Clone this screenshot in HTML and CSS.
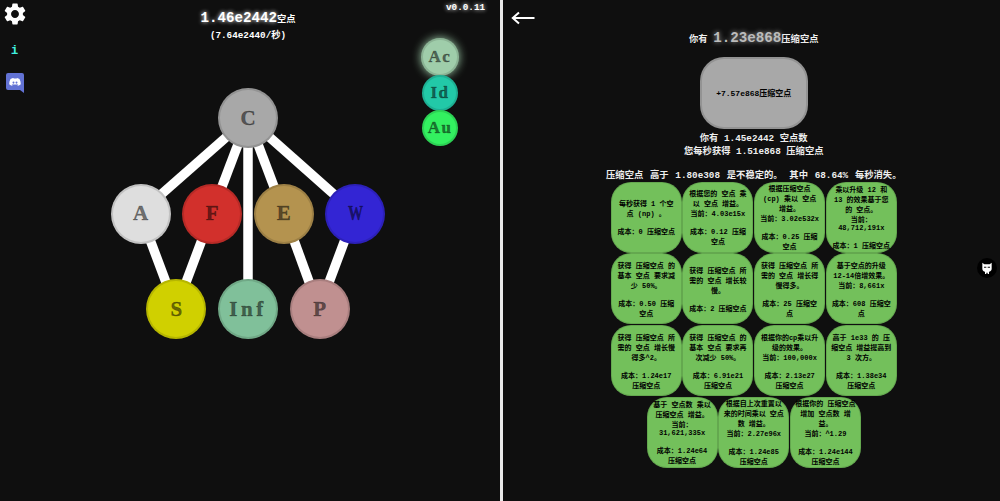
FILE: index.html
```html
<!DOCTYPE html>
<html lang="zh">
<head>
<meta charset="utf-8">
<title>Tree</title>
<link rel="stylesheet" href="styles.css">
</head>
<body>
<div class="app">
  <section class="pane-left">
    <svg class="gear" viewBox="2 2 20 20"><path fill="#fff" d="M19.14 12.94c.04-.3.06-.61.06-.94 0-.32-.02-.64-.07-.94l2.03-1.58c.18-.14.23-.41.12-.61l-1.92-3.32c-.12-.22-.37-.29-.59-.22l-2.39.96c-.5-.38-1.03-.7-1.62-.94l-.36-2.54c-.04-.24-.24-.41-.48-.41h-3.84c-.24 0-.43.17-.47.41l-.36 2.54c-.59.24-1.13.57-1.62.94l-2.39-.96c-.22-.08-.47 0-.59.22L2.74 8.87c-.12.21-.08.47.12.61l2.03 1.58c-.05.3-.09.63-.09.94s.02.64.07.94l-2.03 1.58c-.18.14-.23.41-.12.61l1.92 3.32c.12.22.37.29.59.22l2.39-.96c.5.38 1.03.7 1.62.94l.36 2.54c.05.24.24.41.48.41h3.84c.24 0 .44-.17.47-.41l.36-2.54c.59-.24 1.13-.56 1.62-.94l2.39.96c.22.08.47 0 .59-.22l1.92-3.32c.12-.22.07-.47-.12-.61l-2.01-1.58zM12 15.6c-1.98 0-3.6-1.62-3.6-3.6s1.62-3.6 3.6-3.6 3.6 1.62 3.6 3.6-1.62 3.6-3.6 3.6z"/></svg>
    <span class="info">i</span>
    <svg class="discord" viewBox="0 0 18 20">
      <path fill="#6272d4" d="M2 0h14a2 2 0 0 1 2 2v18l-4-3H2a2 2 0 0 1-2-2V2a2 2 0 0 1 2-2z"/>
      <path fill="#fff" d="M6 5c-1 .2-1.8.5-2.5 1C2.600 7.700 2.200 9.500 2.200 11.300c.9.800 1.900 1.200 2.900 1.400l.7-1c-.4-.1-.8-.3-1.100-.5l.3-.2c1.900.8 4.100.8 6 0l.3.2c-.3.2-.7.4-1.100.5l.7 1c1-.2 2-.6 2.900-1.400 0-1.800-.4-3.600-1.300-5.300-.7-.5-1.500-.8-2.500-1l-.3.6c-.9-.1-1.700-.1-2.600 0zM6.500 8.500a1 1.100 0 1 1 0 2.200 1 1.100 0 0 1 0-2.200zm3 0a1 1.100 0 1 1 0 2.200 1 1.100 0 0 1 0-2.200z" transform="translate(1 0)"/>
    </svg>
    <span class="version">v0.0.11</span>
    <div class="side-nodes">
      <div class="node side ac">Ac</div>
      <div class="node side id">Id</div>
      <div class="node side au">Au</div>
    </div>
    <header class="points">
      <div class="points-main"><b>1.46e2442</b><span>空点</span></div>
      <div class="points-rate">(7.64e2440/秒)</div>
    </header>
    <svg class="links" viewBox="0 0 500 501">
      <g stroke="#fff" stroke-width="9.500">
        <line x1="248" y1="118" x2="140" y2="213"/>
        <line x1="248" y1="118" x2="212" y2="213"/>
        <line x1="248" y1="118" x2="248" y2="309"/>
        <line x1="248" y1="118" x2="284" y2="213"/>
        <line x1="248" y1="118" x2="355" y2="213"/>
        <line x1="140" y1="213" x2="176" y2="309"/>
        <line x1="212" y1="213" x2="176" y2="309"/>
        <line x1="284" y1="213" x2="319" y2="309"/>
        <line x1="355" y1="213" x2="319" y2="309"/>
      </g>
    </svg>
    <div class="tree">
      <div class="tree-row"><div class="node c">C</div></div>
      <div class="tree-row">
        <div class="node a">A</div>
        <div class="node f">F</div>
        <div class="node e">E</div>
        <div class="node w"><span class="narrow">W</span></div>
      </div>
      <div class="tree-row">
        <div class="node s">S</div>
        <div class="node inf">Inf</div>
        <div class="node p">P</div>
      </div>
    </div>
  </section>
  <div class="divider"></div>
  <section class="pane-right">
    <svg class="back" viewBox="0 0 24 14"><path d="M23.500 7H2M8 1.500 1.800 7 8 12.500" fill="none" stroke="#fff" stroke-width="2"/></svg>
    <div class="have">你有 <b>1.23e868</b>压缩空点</div>
    <button class="prestige">+7.57e868压缩空点</button>
    <div class="stats">你有 1.45e2442 空点数<br>您每秒获得 1.51e868 压缩空点</div>
    <div class="warn">压缩空点 高于 1.80e308 是不稳定的。 其中 68.64% 每秒消失。</div>
    <div class="upgrades">
      <div class="upg-row">
        <div class="upg"><p>每秒获得 1 个空点 (np) 。<br><br>成本：0 压缩空点</p></div>
        <div class="upg"><p>根据您的 空点 乘以 空点 增益。<br>当前：4.03e15x<br><br>成本：0.12 压缩空点</p></div>
        <div class="upg"><p>根据压缩空点 (cp) 乘以 空点 增益。<br>当前：3.02e532x<br><br>成本：0.25 压缩空点</p></div>
        <div class="upg"><p>乘以升级 12 和 13 的效果基于您的 空点。<br>当前：<br>48,712,191x<br><br>成本：1 压缩空点</p></div>
      </div>
      <div class="upg-row">
        <div class="upg"><p>获得 压缩空点 的基本 空点 要求减少 50%。<br><br>成本：0.50 压缩空点</p></div>
        <div class="upg"><p>获得 压缩空点 所需的 空点 增长较慢。<br><br>成本：2 压缩空点</p></div>
        <div class="upg"><p>获得 压缩空点 所需的 空点 增长得慢得多。<br><br>成本：25 压缩空点</p></div>
        <div class="upg"><p>基于空点的升级12-14倍增效果。<br>当前：8,661x<br><br>成本：608 压缩空点</p></div>
      </div>
      <div class="upg-row">
        <div class="upg"><p>获得 压缩空点 所需的 空点 增长慢得多^2。<br><br>成本：1.24e17 压缩空点</p></div>
        <div class="upg"><p>获得 压缩空点 的基本 空点 要求再次减少 50%。<br><br>成本：6.91e21 压缩空点</p></div>
        <div class="upg"><p>根据你的cp乘以升级的效果。<br>当前：100,000x<br><br>成本：2.13e27 压缩空点</p></div>
        <div class="upg"><p>高于 1e33 的 压缩空点 增益提高到 3 次方。<br><br>成本：1.38e34 压缩空点</p></div>
      </div>
      <div class="upg-row">
        <div class="upg"><p>基于 空点数 乘以 压缩空点 增益。<br>当前：<br>31,621,335x<br><br>成本：1.24e64 压缩空点</p></div>
        <div class="upg"><p>根据自上次重置以来的时间乘以 空点数 增益。<br>当前：2.27e96x<br><br>成本：1.24e85 压缩空点</p></div>
        <div class="upg"><p>根据你的 压缩空点 增加 空点数 增益。<br>当前：^1.29<br><br>成本：1.24e144 压缩空点</p></div>
      </div>
    </div>
  </section>
  <div class="cat">
    <svg viewBox="0 0 24 24"><path fill="#fff" d="M5 4l3 2.500h8L19 4v9c0 2.500-2 4-4 4.500V21h-2v-2h-2v2H9v-3.500C7 17 5 15.500 5 13z"/><path fill="#0f0f0f" d="M7.500 10h3.500v1.500H7.500zM13 10h3.500v1.500H13z"/></svg>
  </div>
</div>
</body>
</html>
```
FILE: styles.css
```css
* { box-sizing: border-box; }
html, body { margin: 0; height: 100%; }
body {
  background: #0f0f0f;
  color: #fff;
  font-family: "Liberation Mono", "Noto Sans CJK SC", monospace;
  overflow: hidden;
}
.app { display: flex; width: 1000px; height: 501px; position: relative; }
.pane-left { width: 500px; height: 501px; position: relative; padding-right: 4px; }
.divider { width: 3px; background: #e8e8e8; }
.pane-right {
  width: 497px;
  position: relative;
  padding-left: 4.500px;
  display: flex;
  flex-direction: column;
  align-items: center;
}
.gear { position: absolute; left: 4px; top: 3px; width: 22px; height: 22px; }
.info {
  position: absolute; left: 11px; top: 44px;
  font-size: 12px; font-weight: bold; color: #3ff0e0; line-height: 14px;
}
.discord { position: absolute; left: 6px; top: 73px; width: 18px; height: 20px; }
.version {
  position: absolute; left: 446px; top: 2px;
  font-size: 9.300px; font-weight: bold; line-height: 12px;
  text-shadow: 0 0 4px #fff;
}
.side-nodes {
  position: absolute; left: 421px; top: 38px;
  display: flex; flex-direction: column; align-items: center;
  width: 38px; gap: 0;
  z-index: 2;
}
.points { text-align: center; padding-top: 10px; height: 41px; }
.points-main { font-size: 9.300px; line-height: 16px; font-weight: bold; }
.points-main b { font-size: 14.200px; text-shadow: 0 0 4px #fff; }
.points-rate { font-size: 9.300px; line-height: 15px; font-weight: bold; }
.links { position: absolute; left: 0; top: 0; width: 500px; height: 501px; }
.tree {
  position: relative;
  z-index: 1;
  display: flex; flex-direction: column; gap: 35.600px;
  margin-top: 47px;
}
.tree-row { display: flex; justify-content: center; gap: 11.600px; }
.node {
  width: 60px; height: 60px; border-radius: 50%;
  border: 2px solid rgba(0,0,0,.125);
  background-clip: border-box;
  display: flex; align-items: center; justify-content: center;
  font-family: "Liberation Serif", serif;
  font-size: 21px; font-weight: bold; color: #0000;
  -webkit-text-fill-color: rgba(0,0,0,.52);
  -webkit-text-stroke: .5px rgba(0,0,0,.4);
  flex: none;
}
.node.side { width: 36px; height: 36px; font-size: 17px; letter-spacing: 1.500px; }
.node.ac { width: 38px; height: 38px; background: #9fcdaa; box-shadow: 0 0 10px #9fcdaa; margin-bottom: -1px; }
.node.id { background: #22c9a8; margin-bottom: -1px; }
.node.au { background: #33f060; }
.narrow { display: inline-block; transform: scaleX(.72); }
.c { background: #a8a8a8; }
.a { background: #dedede; }
.f { background: #d2302c; }
.e { background: #b4934f; }
.w { background: #3325d4; }
.s { background: #d0d000; }
.inf { background: #80c09a; letter-spacing: 3.500px; }
.p { background: #c09090; }
.back { position: absolute; left: 7.500px; top: 11px; width: 24px; height: 14px; }
.have { margin-top: 29.500px; font-size: 9.300px; line-height: 16px; font-weight: bold; color: #eee; white-space: nowrap; }
.have b { font-size: 14.200px; color: #bbb; text-shadow: 0 0 5px #aaa; }
.prestige {
  margin-top: 9px;
  width: 108px; height: 72px;
  border-radius: 24px;
  background: #a8a8a8;
  border: 2px solid rgba(0,0,0,.125);
  color: #000;
  font: bold 8px "Liberation Mono", "Noto Sans CJK SC", monospace;
  padding: 0;
}
.stats { margin-top: 3.500px; font-size: 9.300px; line-height: 13.300px; font-weight: bold; text-align: center; color: #eee; }
.warn { margin-top: 10.500px; font-size: 9.300px; line-height: 13px; font-weight: bold; color: #eee; white-space: nowrap; word-spacing: 1.200px; }
.upgrades { display: flex; flex-direction: column; gap: .8px; margin-top: -.5px; }
.upg-row { display: flex; justify-content: center; gap: .7px; }
.upg {
  width: 71px; height: 71px; flex: none;
  border-radius: 20px;
  background: #73c05b;
  border: 1.500px solid rgba(0,0,0,.125);
  color: #000;
  display: flex; align-items: center; justify-content: center;
  padding: 0 4px;
  text-align: center;
}
.upg p { margin: 0; font-size: 7px; line-height: normal; font-weight: bold; }
.cat {
  position: absolute; left: 977px; top: 258px;
  width: 20px; height: 20px; border-radius: 50%;
  background: #000;
  display: flex; align-items: center; justify-content: center;
}
.cat svg { width: 16px; height: 16px; }
```
